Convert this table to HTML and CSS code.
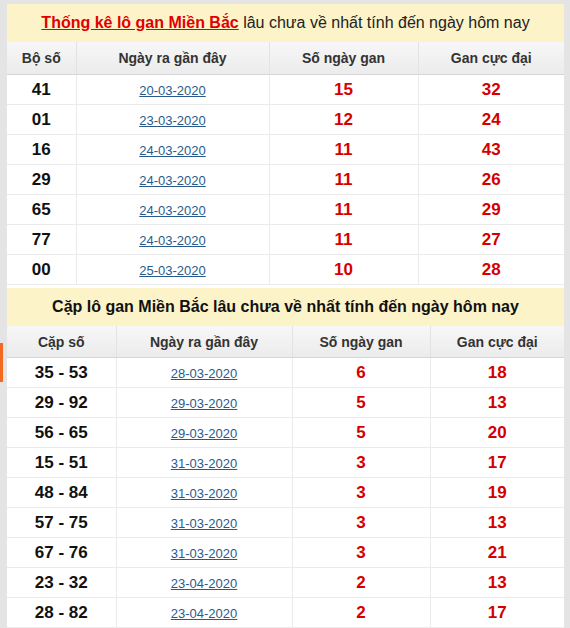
FILE: index.html
```html
<!DOCTYPE html>
<html lang="vi">
<head>
<meta charset="utf-8">
<link rel="stylesheet" href="styles.css">
</head>
<body>
<div class="tab"></div>
<div class="wrap">
  <div class="title"><a class="title-link" href="#">Thống kê lô gan Miền Bắc</a> lâu chưa về nhất tính đến ngày hôm nay</div>
  <table class="tbl t1">
    <colgroup><col class="c1"><col class="c2"><col class="c3"><col class="c4"></colgroup>
    <thead><tr><th>Bộ số</th><th>Ngày ra gần đây</th><th>Số ngày gan</th><th>Gan cực đại</th></tr></thead>
    <tbody>
      <tr><td class="num">41</td><td><a href="#">20-03-2020</a></td><td class="red">15</td><td class="red">32</td></tr>
      <tr><td class="num">01</td><td><a href="#">23-03-2020</a></td><td class="red">12</td><td class="red">24</td></tr>
      <tr><td class="num">16</td><td><a href="#">24-03-2020</a></td><td class="red">11</td><td class="red">43</td></tr>
      <tr><td class="num">29</td><td><a href="#">24-03-2020</a></td><td class="red">11</td><td class="red">26</td></tr>
      <tr><td class="num">65</td><td><a href="#">24-03-2020</a></td><td class="red">11</td><td class="red">29</td></tr>
      <tr><td class="num">77</td><td><a href="#">24-03-2020</a></td><td class="red">11</td><td class="red">27</td></tr>
      <tr><td class="num">00</td><td><a href="#">25-03-2020</a></td><td class="red">10</td><td class="red">28</td></tr>
    </tbody>
  </table>
  <div class="title title2">Cặp lô gan Miền Bắc lâu chưa về nhất tính đến ngày hôm nay</div>
  <table class="tbl t2">
    <colgroup><col class="d1"><col class="d2"><col class="d3"><col class="d4"></colgroup>
    <thead><tr><th>Cặp số</th><th>Ngày ra gần đây</th><th>Số ngày gan</th><th>Gan cực đại</th></tr></thead>
    <tbody>
      <tr><td class="num">35 - 53</td><td><a href="#">28-03-2020</a></td><td class="red">6</td><td class="red">18</td></tr>
      <tr><td class="num">29 - 92</td><td><a href="#">29-03-2020</a></td><td class="red">5</td><td class="red">13</td></tr>
      <tr><td class="num">56 - 65</td><td><a href="#">29-03-2020</a></td><td class="red">5</td><td class="red">20</td></tr>
      <tr><td class="num">15 - 51</td><td><a href="#">31-03-2020</a></td><td class="red">3</td><td class="red">17</td></tr>
      <tr><td class="num">48 - 84</td><td><a href="#">31-03-2020</a></td><td class="red">3</td><td class="red">19</td></tr>
      <tr><td class="num">57 - 75</td><td><a href="#">31-03-2020</a></td><td class="red">3</td><td class="red">13</td></tr>
      <tr><td class="num">67 - 76</td><td><a href="#">31-03-2020</a></td><td class="red">3</td><td class="red">21</td></tr>
      <tr><td class="num">23 - 32</td><td><a href="#">23-04-2020</a></td><td class="red">2</td><td class="red">13</td></tr>
      <tr><td class="num">28 - 82</td><td><a href="#">23-04-2020</a></td><td class="red">2</td><td class="red">17</td></tr>
    </tbody>
  </table>
</div>
</body>
</html>
```
FILE: styles.css
```css
html, body {
  margin: 0;
  padding: 0;
  background: #e4e4e4;
  font-family: "Liberation Sans", Arial, sans-serif;
  overflow: hidden;
}
.wrap {
  margin: 4px 0 0 7px;
  width: 557px;
  background: #fff;
}
.tab {
  position: absolute;
  left: 0;
  top: 343px;
  width: 3px;
  height: 39px;
  background: #f26a21;
}
.title {
  background: #fcf3c8;
  height: 38px;
  line-height: 38px;
  text-align: center;
  font-size: 16px;
  color: #222;
}
.title-link {
  color: #e10000;
  font-weight: bold;
  text-decoration: underline;
}
.title2 {
  font-weight: bold;
  font-size: 16px;
  color: #111;
  margin-top: 3px;
}
.tbl {
  width: 557px;
  border-collapse: collapse;
  table-layout: fixed;
}
.tbl th {
  height: 32px;
  padding: 0;
  font-size: 14px;
  font-weight: bold;
  color: #333;
  background: linear-gradient(#f7f7f7, #ebebeb);
  border: 1px solid #e3e3e3;
  border-top: 0;
  border-bottom: 1px solid #d6d6d6;
}
.tbl td {
  height: 29px;
  padding: 0;
  text-align: center;
  border: 1px solid #ebebeb;
}
.tbl th:first-child, .tbl td:first-child { border-left: 0; }
.tbl th:last-child, .tbl td:last-child { border-right: 0; }
.t2 th { height: 31px; }
.c1 { width: 69px; }
.c2 { width: 193px; }
.c3 { width: 149px; }
.c4 { width: 146px; }
.d1 { width: 109px; }
.d2 { width: 176px; }
.d3 { width: 138px; }
.d4 { width: 134px; }
.num {
  font-size: 17px;
  font-weight: bold;
  color: #111;
}
.red {
  font-size: 17px;
  font-weight: bold;
  color: #d40000;
}
.tbl a {
  font-size: 13px;
  color: #2a5a8c;
  text-decoration: underline;
}
```
